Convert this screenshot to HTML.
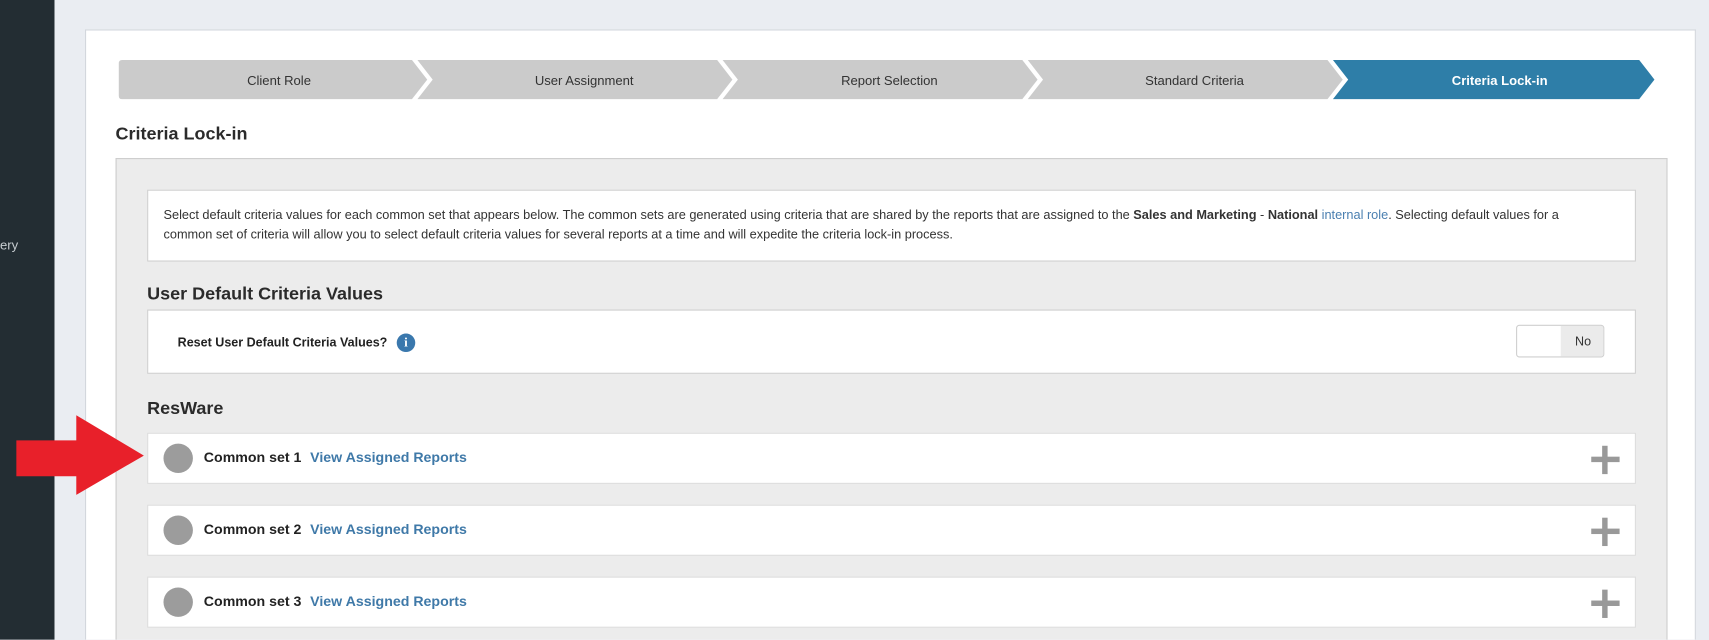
<!DOCTYPE html>
<html><head><meta charset="utf-8"><style>
html,body{margin:0;padding:0;width:1709px;height:640px;overflow:hidden;background:#eaedf2;}
#s{position:absolute;left:0;top:0;width:1568px;height:587px;overflow:hidden;transform:scale(1.0899);transform-origin:0 0;font-family:"Liberation Sans",sans-serif;color:#2b2b2b;}
.a{position:absolute;}
.h{font-weight:bold;font-size:16.5px;color:#2b2b2b;}
.box{background:#fff;border:1px solid #cfcfcf;box-sizing:border-box;}
.row{position:absolute;left:135px;width:1366px;height:47px;background:#fff;border:1px solid #dcdcdc;box-sizing:border-box;}
.row .c{position:absolute;left:14px;top:9px;width:27px;height:27px;border-radius:50%;background:#9c9c9c;}
.row .t{position:absolute;left:51px;top:14px;font-size:13px;font-weight:bold;color:#222;white-space:nowrap;}
.row .t span{color:#3f79a8;margin-left:8px;}
.row .p{position:absolute;left:1324px;top:11px;width:26px;height:26px;}
.row .p:before{content:"";position:absolute;left:0;top:10px;width:26px;height:5px;background:#999;}
.row .p:after{content:"";position:absolute;left:10px;top:0;width:5px;height:26px;background:#999;}
</style></head><body><div id="s">
<div class="a" style="left:0;top:0;width:50px;height:587px;background:#232d33;"></div>
<div class="a" style="left:0;top:218px;font-size:12px;color:#c7cdd1;">ery</div>
<div class="a" style="left:78px;top:27px;width:1478px;height:560px;background:#fff;border:1px solid #d3d7dd;border-bottom:0;box-sizing:border-box;"></div>
<svg class="a" style="left:0;top:0" width="1568" height="100">
<path d="M112,55 L378,55 L392,73 L378,91 L112,91 Q109,91 109,88 L109,58 Q109,55 112,55Z" fill="#cbcbcb"/>
<path d="M383,55 L658,55 L672,73 L658,91 L383,91 L397,73Z" fill="#cbcbcb"/>
<path d="M663,55 L938,55 L952,73 L938,91 L663,91 L677,73Z" fill="#cbcbcb"/>
<path d="M943,55 L1218,55 L1232,73 L1218,91 L943,91 L957,73Z" fill="#cbcbcb"/>
<path d="M1223,55 L1504,55 L1518,73 L1504,91 L1223,91 L1237,73Z" fill="#2e7ea8"/>
<g font-family="Liberation Sans, sans-serif" font-size="12" text-anchor="middle" fill="#333">
<text x="256" y="78">Client Role</text>
<text x="536" y="78">User Assignment</text>
<text x="816" y="78">Report Selection</text>
<text x="1096" y="78">Standard Criteria</text>
<text x="1376" y="78" fill="#fff" font-weight="bold">Criteria Lock-in</text>
</g></svg>
<div class="a h" style="left:106px;top:114px;">Criteria Lock-in</div>
<div class="a" style="left:106px;top:145px;width:1424px;height:442px;background:#ececec;border:1px solid #cdcdcd;border-bottom:0;box-sizing:border-box;"></div>
<div class="a box" style="left:135px;top:174px;width:1366px;height:66px;padding:14px 0 0 14px;font-size:11.7px;line-height:18px;color:#333;white-space:nowrap;overflow:hidden;">Select default criteria values for each common set that appears below. The common sets are generated using criteria that are shared by the reports that are assigned to the <b>Sales and Marketing</b> - <b>National</b> <span style="color:#4a7fb0">internal role</span>. Selecting default values for a<br>common set of criteria will allow you to select default criteria values for several reports at a time and will expedite the criteria lock-in process.</div>
<div class="a h" style="left:135px;top:261px;">User Default Criteria Values</div>
<div class="a box" style="left:135px;top:284px;width:1366px;height:59px;"></div>
<div class="a" style="left:163px;top:309px;font-size:11.5px;font-weight:bold;color:#222;">Reset User Default Criteria Values?</div>
<div class="a" style="left:364px;top:306px;width:17px;height:17px;border-radius:50%;background:#3a78ad;color:#fff;font-size:12px;font-weight:bold;text-align:center;line-height:17px;font-family:'Liberation Serif',serif;">i</div>
<div class="a" style="left:1391px;top:298px;width:81px;height:30px;border:1px solid #cfcfcf;border-radius:3px;box-sizing:border-box;background:#fff;overflow:hidden;">
<div class="a" style="left:40px;top:0;width:41px;height:30px;background:#ebebeb;font-size:11.5px;color:#333;text-align:center;line-height:30px;">No</div></div>
<div class="a h" style="left:135px;top:366px;">ResWare</div>
<div class="row" style="top:397px;"><div class="c"></div><div class="t">Common set 1<span>View Assigned Reports</span></div><div class="p"></div></div>
<div class="row" style="top:463px;"><div class="c"></div><div class="t">Common set 2<span>View Assigned Reports</span></div><div class="p"></div></div>
<div class="row" style="top:529px;"><div class="c"></div><div class="t">Common set 3<span>View Assigned Reports</span></div><div class="p"></div></div>
<svg class="a" style="left:0;top:0" width="150" height="470"><path d="M15,404 L70,404 L70,381 L132,418 L70,454 L70,437 L15,437Z" fill="#e8202a"/></svg>
</div></body></html>
